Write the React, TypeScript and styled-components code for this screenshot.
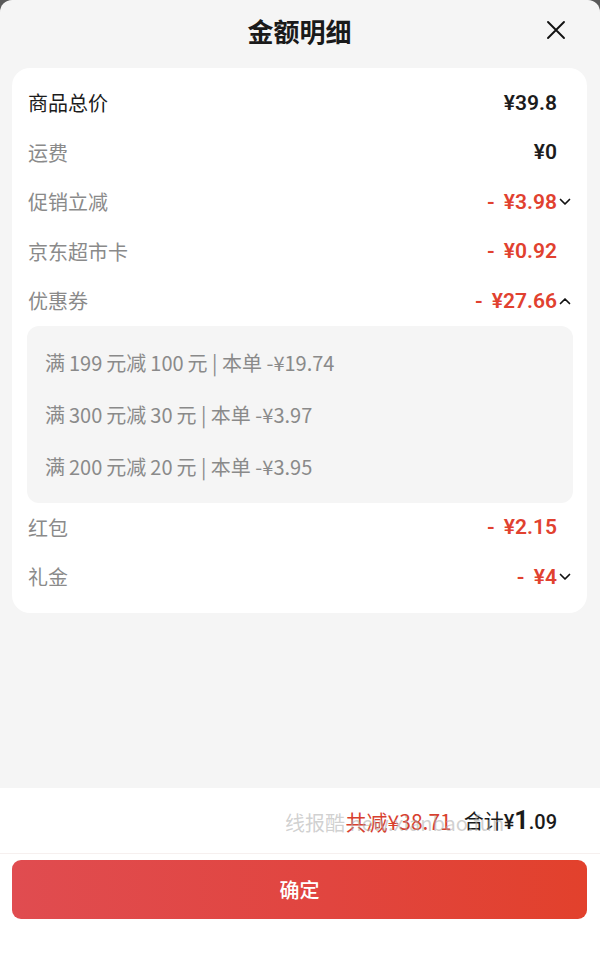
import React from "react";
import styled, { createGlobalStyle } from "styled-components";

const Global = createGlobalStyle`
  html, body { margin: 0; padding: 0; background: #5a5a5a; }
  body { font-family: "Noto Sans CJK SC", "Noto Sans", sans-serif; -webkit-font-smoothing: antialiased; }
  #root { min-height: 971px; }
`;

const Sheet = styled.div`
  width: 600px;
  height: 971px;
  display: flex;
  flex-direction: column;
  border-radius: 12px 12px 0 0;
  overflow: hidden;
  background: #f5f5f5;
`;

const Body = styled.div`
  flex: 1;
  display: flex;
  flex-direction: column;
  padding: 0 13px 0 12px;
`;

const Header = styled.div`
  height: 60px;
  position: relative;
  display: flex;
  align-items: center;
  justify-content: center;
  margin-bottom: 8px;
`;

const Title = styled.h1`
  margin: 0;
  font-size: 26px;
  font-weight: 600;
  color: #1a1a1a;
`;

const Close = styled.button`
  position: absolute;
  right: 20px;
  top: 19px;
  width: 22px;
  height: 22px;
  padding: 0;
  border: 0;
  background: none;
  display: flex;
  align-items: center;
  justify-content: center;
`;

const Card = styled.div`
  background: #fff;
  border-radius: 18px;
  padding: 10px 0 11px;
  display: flex;
  flex-direction: column;
`;

const Row = styled.div`
  height: 49.5px;
  display: flex;
  align-items: center;
  justify-content: space-between;
  padding: 0 14px 0 16px;
`;

const Label = styled.span<{ $strong?: boolean }>`
  font-size: 20px;
  color: ${(p) => (p.$strong ? "#1c1c1c" : "#8a8a8a")};
`;

const Right = styled.div`
  display: flex;
  align-items: center;
`;

const Value = styled.span<{ $red?: boolean }>`
  font-family: Roboto, "Noto Sans", sans-serif;
  font-size: 21px;
  font-weight: 600;
  color: ${(p) => (p.$red ? "#e1412f" : "#1c1c1c")};
  white-space: pre;
`;

const Dash = styled.span`
  margin-right: 4px;
`;

const ChevronSlot = styled.span`
  width: 16px;
  height: 16px;
  display: flex;
  align-items: center;
  justify-content: center;
`;

const CouponBox = styled.div`
  margin: 0 14px 0 15px;
  background: #f5f5f5;
  border-radius: 12px;
  padding: 10.5px 18px 10.5px;
  display: flex;
  flex-direction: column;
`;

const CouponLine = styled.div`
  height: 52px;
  display: flex;
  align-items: center;
  font-size: 20px;
  color: #8a8a8a;
  font-family: "Noto Sans CJK SC", sans-serif;
  white-space: pre;
`;

const Footer = styled.div`
  background: #fff;
  height: 183px;
  display: flex;
  flex-direction: column;
`;

const Summary = styled.div`
  position: relative;
  height: 65px;
  display: flex;
  align-items: center;
  justify-content: flex-end;
  padding-right: 43px;
  border-bottom: 1px solid #f6f0ef;
  font-size: 20px;
`;

const Saved = styled.span`
  color: #d8402e;
  font-size: 21px;
  margin-right: 12px;
`;

const Total = styled.span`
  color: #1a1a1a;
  display: flex;
  align-items: baseline;
  font-size: 20px;
`;

const Big = styled.span`
  font-family: Roboto, sans-serif;
  font-size: 25px;
  font-weight: 700;
`;

const Small = styled.span`
  font-family: Roboto, sans-serif;
  font-size: 20px;
  font-weight: 500;
`;

const Watermark = styled.span`
  position: absolute;
  left: 285px;
  top: 50%;
  transform: translateY(-45%);
  font-size: 20px;
  color: rgba(170, 170, 170, 0.55);
  pointer-events: none;
  white-space: pre;
`;

const Confirm = styled.button`
  margin: 6px 13px 0 12px;
  height: 59px;
  border: 0;
  border-radius: 9px;
  background: linear-gradient(90deg, #e04c50 0%, #e1453f 55%, #e2412c 100%);
  color: #fff;
  font-size: 20px;
  font-family: "Noto Sans CJK SC", sans-serif;
  font-weight: 500;
`;

const Chevron = ({ up }: { up?: boolean }) => (
  <svg width="12" height="8" viewBox="0 0 12 8">
    <path
      d={up ? "M1.5 6.5 L6 2 L10.5 6.5" : "M1.5 1.5 L6 6 L10.5 1.5"}
      fill="none"
      stroke="#111"
      strokeWidth="1.7"
      strokeLinecap="round"
      strokeLinejoin="round"
    />
  </svg>
);

type Item = { label: string; value: string; red?: boolean; chevron?: "up" | "down"; strong?: boolean };

const ItemRow = ({ label, value, red, chevron, strong }: Item) => (
  <Row>
    <Label $strong={strong}>{label}</Label>
    <Right>
      <Value $red={red}>
        {red && <Dash>-</Dash>}
        {red ? " " + value : value}
      </Value>
      <ChevronSlot>{chevron && <Chevron up={chevron === "up"} />}</ChevronSlot>
    </Right>
  </Row>
);

const T = "\u2009";
const coupons = [
  `满${T}199${T}元减${T}100${T}元 | 本单 -¥19.74`,
  `满${T}300${T}元减${T}30${T}元 | 本单 -¥3.97`,
  `满${T}200${T}元减${T}20${T}元 | 本单 -¥3.95`,
];

export default function App() {
  return (
    <>
      <Global />
      <Sheet>
        <Body>
          <Header>
            <Title>金额明细</Title>
            <Close aria-label="close">
              <svg width="20" height="20" viewBox="0 0 20 20">
                <path d="M2 2 L18 18 M18 2 L2 18" stroke="#111" strokeWidth="1.9" strokeLinecap="round" />
              </svg>
            </Close>
          </Header>
          <Card>
            <ItemRow label="商品总价" value="¥39.8" strong />
            <ItemRow label="运费" value="¥0" />
            <ItemRow label="促销立减" value="¥3.98" red chevron="down" />
            <ItemRow label="京东超市卡" value="¥0.92" red />
            <ItemRow label="优惠券" value="¥27.66" red chevron="up" />
            <CouponBox>
              {coupons.map((c) => (
                <CouponLine key={c}>{c}</CouponLine>
              ))}
            </CouponBox>
            <ItemRow label="红包" value="¥2.15" red />
            <ItemRow label="礼金" value="¥4" red chevron="down" />
          </Card>
        </Body>
        <Footer>
          <Summary>
            <Saved>共减¥38.71</Saved>
            <Total>
              合计<Small>¥</Small>
              <Big>1</Big>
              <Small>.09</Small>
            </Total>
            <Watermark>线报酷 new.xianbao.fun</Watermark>
          </Summary>
          <Confirm>确定</Confirm>
        </Footer>
      </Sheet>
    </>
  );
}
